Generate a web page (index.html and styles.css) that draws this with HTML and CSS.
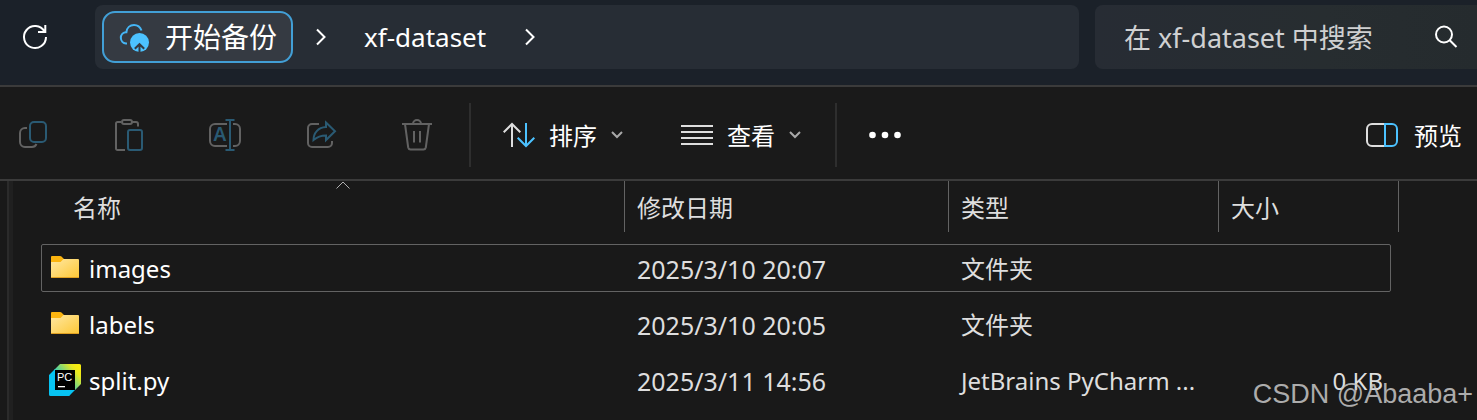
FILE: index.html
```
<!DOCTYPE html>
<html lang="zh-CN">
<head>
    <meta charset="UTF-8">
    <meta name="viewport" content="width=device-width, initial-scale=1.0">
    <title>xf-dataset</title>
    <link rel="stylesheet" href="styles.css">
</head>
<body>
    <header class="address-bar">
        <button class="icon-btn refresh" aria-label="刷新">
            <svg width="28" height="28" viewBox="0 0 28 28"><path d="M25 14A11 11 0 1 1 23.500 8.500M24.300 2v7H17"/></svg>
        </button>
        <nav class="crumbs">
            <button class="backup">
                <svg width="32" height="32" viewBox="0 0 32 32">
                    <path class="cloud" d="M9 22.5H8A5.7 5.7 0 0 1 7.6 11.2H8.4C8.8 6.8 12 4 16 4 19.500 4 22.300 6.200 23.500 9.500"/>
                    <circle class="disc" cx="21.500" cy="21.500" r="9.500"/>
                    <path class="up" d="M21.500 31.500V24M16.800 27.800L21.500 23.200 26.200 27.800"/>
                </svg>
                开始备份
            </button>
            <svg class="crumb-arrow" width="12" height="18" viewBox="0 0 12 18"><path d="M2 1.500L9.500 9 2 16.500"/></svg>
            <a class="crumb" href="#">xf-dataset</a>
            <svg class="crumb-arrow" width="12" height="18" viewBox="0 0 12 18"><path d="M2 1.500L9.500 9 2 16.500"/></svg>
        </nav>
        <div class="search">
            <input type="text" aria-label="搜索" placeholder="在 xf-dataset 中搜索">
            <button class="icon-btn" aria-label="搜索">
                <svg width="24" height="24" viewBox="0 0 24 24"><circle cx="10" cy="9.500" r="8"/><path d="M15.700 15.200L22.500 22"/></svg>
            </button>
        </div>
    </header>

    <div class="toolbar">
        <div class="file-actions">
            <button class="tool" disabled aria-label="复制">
                <svg width="32" height="32" viewBox="0 0 32 32">
                    <path d="M10 9H8a5 5 0 0 0-5 5v9a5 5 0 0 0 5 5h7a5 5 0 0 0 4.500-3"/>
                    <rect class="blue" x="13" y="3" width="16" height="20" rx="4"/>
                </svg>
            </button>
            <button class="tool" disabled aria-label="粘贴">
                <svg width="32" height="32" viewBox="0 0 32 32">
                    <path d="M8 3H4.500A1.500 1.500 0 0 0 3 4.500V29.500A1.500 1.500 0 0 0 4.500 31H12M19 3H23a2 2 0 0 1 2 2V7.500"/>
                    <rect x="9" y="1" width="10" height="4" rx="2"/>
                    <rect class="blue" x="15" y="11" width="14" height="20" rx="2"/>
                </svg>
            </button>
            <button class="tool" disabled aria-label="重命名">
                <svg width="32" height="32" viewBox="0 0 32 32">
                    <path d="M18 5H6a5 5 0 0 0-5 5v12a5 5 0 0 0 5 5H18M24 5h2a5 5 0 0 1 5 5v12a5 5 0 0 1-5 5H24"/>
                    <path class="blue" d="M21 1V31M16.500 1H25.500M16.500 31H25.500"/>
                    <text class="letter" x="11" y="22" text-anchor="middle">A</text>
                </svg>
            </button>
            <button class="tool" disabled aria-label="共享">
                <svg width="32" height="32" viewBox="0 0 32 32">
                    <path d="M14 5H7a4 4 0 0 0-4 4v15a4 4 0 0 0 4 4H23a4 4 0 0 0 4-4V22"/>
                    <path class="blue" d="M21 3.500L30 12.200 21 21V16.500C15.500 16.500 12 18 8.500 21 8.500 14 13 8.500 21 8Z"/>
                </svg>
            </button>
            <button class="tool" disabled aria-label="删除">
                <svg width="32" height="32" viewBox="0 0 32 32">
                    <path d="M1 5H31M12 5A4 4 0 0 1 20 5M4 5L7.200 28.500A2.500 2.500 0 0 0 9.500 30.500H22.500A2.500 2.500 0 0 0 24.800 28.500L28 5M13 12V23.500M19 12V23.500"/>
                </svg>
            </button>
        </div>
        <div class="view-actions">
            <button class="tool">
                <svg width="32" height="32" viewBox="0 0 32 32">
                    <path d="M9 28V5M.7 13.300L9 5 17.300 13.300"/>
                    <path class="blue" d="M23 4V27M14.700 18.700L23 27 31.300 18.700"/>
                </svg>
                <span>排序</span>
                <svg class="chevron" width="12" height="8" viewBox="0 0 12 8"><path d="M1 1L6 6 11 1"/></svg>
            </button>
            <button class="tool">
                <svg width="32" height="32" viewBox="0 0 32 32"><path d="M0 7H32M0 13H32M0 19H32M0 25H32"/></svg>
                <span>查看</span>
                <svg class="chevron" width="12" height="8" viewBox="0 0 12 8"><path d="M1 1L6 6 11 1"/></svg>
            </button>
        </div>
        <button class="tool more" aria-label="查看更多">
            <svg width="32" height="32" viewBox="0 0 32 32"><circle cx="3.500" cy="16" r="3.300"/><circle cx="16" cy="16" r="3.300"/><circle cx="28.500" cy="16" r="3.300"/></svg>
        </button>
        <button class="tool preview">
            <svg width="32" height="32" viewBox="0 0 32 32">
                <path d="M19 5H6a5 5 0 0 0-5 5v12a5 5 0 0 0 5 5H19"/>
                <path class="blue" d="M19 5h7a5 5 0 0 1 5 5v12a5 5 0 0 1-5 5H19Z"/>
            </svg>
            <span>预览</span>
        </button>
    </div>

    <main class="files">
        <div class="splitter"></div>
        <table>
            <colgroup>
                <col class="col-name">
                <col class="col-date">
                <col class="col-type">
                <col class="col-size">
            </colgroup>
            <thead>
                <tr>
                    <th>
                        <div class="label">
                            名称
                            <svg class="caret" width="14" height="8" viewBox="0 0 14 8"><path d="M.5 7.500L7 1 13.500 7.500"/></svg>
                        </div>
                    </th>
                    <th><div class="label">修改日期</div></th>
                    <th><div class="label">类型</div></th>
                    <th><div class="label">大小</div></th>
                </tr>
            </thead>
            <tbody>
                <tr class="focused">
                    <td>
                        <div class="name">
                            <svg width="32" height="32" viewBox="0 0 32 32">
                                <defs>
                                    <linearGradient id="folder" x1="0" y1="0" x2="1" y2="1">
                                        <stop offset="0" stop-color="#ffe8a3"/>
                                        <stop offset="1" stop-color="#fdc735"/>
                                    </linearGradient>
                                </defs>
                                <path fill="#fbb40f" d="M2 5a1 1 0 0 1 1-1h8a2 2 0 0 1 1.500.6L15 7v4H2z"/>
                                <path fill="url(#folder)" d="M2 10h9.500L14.500 7H29a1 1 0 0 1 1 1v17a1 1 0 0 1-1 1H3a1 1 0 0 1-1-1z"/>
                                <path fill="#e0a021" d="M2 25H30a1 1 0 0 1-1 1H3a1 1 0 0 1-1-1z"/>
                            </svg>
                            <span>images</span>
                        </div>
                    </td>
                    <td class="date">2025/3/10 20:07</td>
                    <td>文件夹</td>
                    <td></td>
                </tr>
                <tr>
                    <td>
                        <div class="name">
                            <svg width="32" height="32" viewBox="0 0 32 32">
                                <path fill="#fbb40f" d="M2 5a1 1 0 0 1 1-1h8a2 2 0 0 1 1.500.6L15 7v4H2z"/>
                                <path fill="url(#folder)" d="M2 10h9.500L14.500 7H29a1 1 0 0 1 1 1v17a1 1 0 0 1-1 1H3a1 1 0 0 1-1-1z"/>
                                <path fill="#e0a021" d="M2 25H30a1 1 0 0 1-1 1H3a1 1 0 0 1-1-1z"/>
                            </svg>
                            <span>labels</span>
                        </div>
                    </td>
                    <td class="date">2025/3/10 20:05</td>
                    <td>文件夹</td>
                    <td></td>
                </tr>
                <tr>
                    <td>
                        <div class="name">
                            <svg width="32" height="32" viewBox="0 0 32 32">
                                <defs>
                                    <linearGradient id="pycharm" gradientUnits="userSpaceOnUse" x1="29" y1="3" x2="12" y2="17">
                                        <stop offset="0" stop-color="#f6ec10"/>
                                        <stop offset=".2" stop-color="#e8e820"/>
                                        <stop offset="1" stop-color="#22c9c8"/>
                                    </linearGradient>
                                </defs>
                                <path fill="#07c3f2" d="M0 11L6 5H14V24H26L20 32H1.500A1.500 1.500 0 0 1 0 30.500z"/>
                                <path fill="url(#pycharm)" d="M5 6L11 0H30.500A1.500 1.500 0 0 1 32 1.500V20L26 26H20V6z"/>
                                <path fill="#07c3f2" d="M6 26H26L20 32H6z"/>
                                <path d="M6 6H26V26H6z"/>
                                <text class="pc" x="8" y="17">PC</text>
                                <path fill="#fff" d="M9 22H16V23.300H9z"/>
                            </svg>
                            <span>split.py</span>
                        </div>
                    </td>
                    <td class="date">2025/3/11 14:56</td>
                    <td>JetBrains PyCharm ...</td>
                    <td class="size">0 KB</td>
                </tr>
            </tbody>
        </table>
        <div class="watermark">CSDN @Abaaba+</div>
    </main>
</body>
</html>
```
FILE: styles.css
```
* {
    box-sizing: border-box;
}

body {
    margin: 0;
    min-height: 100vh;
    display: flex;
    flex-direction: column;
    background-color: #191919;
    color: #fff;
    font-family: "Noto Sans", "Noto Sans CJK SC", sans-serif;
    font-size: 24px;
    line-height: 32px;
    overflow-x: hidden;
}

button {
    padding: 0;
    border: none;
    background: none;
    color: inherit;
    font: inherit;
}

svg {
    display: block;
    flex: none;
}

/* address bar */
.address-bar {
    display: flex;
    align-items: center;
    gap: 16px;
    padding: 5px 0 16px 21px;
    background-color: #1b2129;
    border-bottom: 2px solid #3b3b3b;
}

.icon-btn svg {
    fill: none;
    stroke: #fff;
    stroke-width: 2;
}

.refresh {
    margin-right: 30px;
}

.crumbs {
    flex: 1;
    display: flex;
    align-items: center;
    height: 64px;
    padding-left: 7px;
    border-radius: 8px;
    background-color: #272d35;
}

.backup {
    display: flex;
    align-items: center;
    gap: 15px;
    height: 52px;
    padding: 0 14px;
    border: 2px solid #429fd6;
    border-radius: 13px;
    background-color: #353a42;
    font-size: 28px;
}

.cloud {
    fill: none;
    stroke: #45b5f5;
    stroke-width: 2;
}

.disc {
    fill: #4cc2ff;
}

.up {
    fill: none;
    stroke: #353a42;
    stroke-width: 2;
}

.crumb-arrow {
    margin: 0 37px 0 22px;
    fill: none;
    stroke: #fff;
    stroke-width: 2;
}

.crumb {
    margin-right: 16px;
    color: #fff;
    font-size: 26px;
    text-decoration: none;
}

.search {
    display: flex;
    align-items: center;
    width: 382px;
    height: 64px;
    padding: 0 19px 0 29px;
    border-radius: 8px 0 0 8px;
    background: linear-gradient(90deg, #272c34, #272d30 60%, #252b2e);
}

.search input {
    flex: 1;
    min-width: 0;
    padding: 2px 0 0;
    border: none;
    background: none;
    color: #fff;
    font: inherit;
    font-size: 27px;
}

.search input::placeholder {
    color: #cfd0d1;
    opacity: 1;
}

/* toolbar */
.toolbar {
    display: flex;
    align-items: center;
    padding: 16px 15px 12px 17px;
    border-bottom: 2px solid #3b3b3b;
    background-color: #1a1a1a;
}

.file-actions,
.view-actions {
    display: flex;
    align-items: center;
    height: 64px;
    border-right: 2px solid #2e2e2e;
}

.file-actions {
    gap: 64px;
    padding-right: 36px;
}

.view-actions {
    gap: 58px;
    padding: 0 34px 0 32px;
}

.tool {
    display: flex;
    align-items: center;
    gap: 14px;
}

.tool span {
    padding-top: 2px;
}

.tool svg {
    fill: none;
    stroke: #dedede;
    stroke-width: 2;
}

.tool .blue {
    stroke: #4cc2ff;
}

.tool:disabled svg {
    stroke: #626262;
}

.tool:disabled .blue {
    stroke: #2a5a73;
}

.letter {
    fill: #2a5a73;
    stroke: none;
    font-size: 19px;
    font-weight: 600;
}

.tool .chevron {
    stroke: #a8a8a8;
}

.more {
    margin-left: 32px;
}

.more svg {
    fill: #fff;
    stroke: none;
}

.preview {
    gap: 16px;
    margin-left: auto;
}

/* file list */
.files {
    flex: 1;
    display: flex;
    align-items: flex-start;
    position: relative;
    padding-left: 7px;
}

.splitter {
    align-self: stretch;
    width: 6px;
    margin-right: 28px;
    border-left: 2px solid #2b2b2b;
    background-color: #202020;
}

table {
    width: 1358px;
    table-layout: fixed;
    border-collapse: collapse;
    color: #dedede;
}

.col-name {
    width: 583px;
}

.col-date {
    width: 324px;
}

.col-type {
    width: 270px;
}

.col-size {
    width: 181px;
}

th {
    height: 59px;
    padding: 0;
    font-weight: normal;
    text-align: left;
    vertical-align: top;
}

.label {
    position: relative;
    height: 51px;
    padding: 11px 12px 8px;
    border-left: 1px solid #636363;
}

th:first-child .label {
    margin-left: 20px;
    border-left: none;
}

th:last-child .label {
    border-right: 1px solid #636363;
}

.caret {
    position: absolute;
    top: 0;
    left: 50%;
    transform: translateX(-50%);
    fill: none;
    stroke: #b0b0b0;
}

tbody tr {
    position: relative;
}

td {
    height: 56px;
    padding: 2px 0 0 13px;
    white-space: nowrap;
}

td:first-child {
    padding: 0 0 0 8px;
}

.name {
    display: flex;
    align-items: center;
    gap: 8px;
    color: #fff;
}

.name span {
    padding-top: 2px;
}

.pc {
    fill: #fff;
    font-family: "Liberation Sans", sans-serif;
    font-size: 11px;
}

.date {
    font-size: 25px;
}

td.size {
    padding-right: 16px;
    text-align: right;
}

.focused::after {
    content: "";
    position: absolute;
    inset: 4px 8px 4px 0;
    border: 1px solid #636363;
    border-radius: 2px;
}

.watermark {
    position: absolute;
    right: 4px;
    bottom: 10px;
    color: rgba(200, 200, 200, 0.85);
    font-family: "Liberation Sans", Arial, sans-serif;
    font-size: 27px;
}
```
